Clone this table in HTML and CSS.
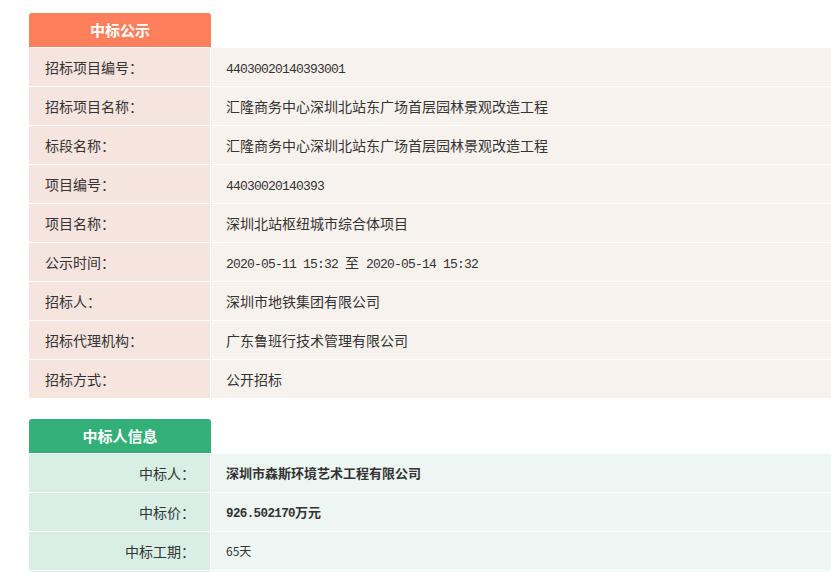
FILE: index.html
```html
<!DOCTYPE html>
<html lang="zh-CN">
<head>
<meta charset="utf-8">
<title>中标公示</title>
<link rel="stylesheet" href="styles.css">
</head>
<body>
<div class="page">
  <section class="block block-orange">
    <div class="tab">中标公示</div>
    <div class="rows">
      <div class="row"><div class="label">招标项目编号：</div><div class="value"><span class="num">44030020140393001</span></div></div>
      <div class="row"><div class="label">招标项目名称：</div><div class="value">汇隆商务中心深圳北站东广场首层园林景观改造工程</div></div>
      <div class="row"><div class="label">标段名称：</div><div class="value">汇隆商务中心深圳北站东广场首层园林景观改造工程</div></div>
      <div class="row"><div class="label">项目编号：</div><div class="value"><span class="num">44030020140393</span></div></div>
      <div class="row"><div class="label">项目名称：</div><div class="value">深圳北站枢纽城市综合体项目</div></div>
      <div class="row"><div class="label">公示时间：</div><div class="value"><span class="num">2020-05-11 15:32 </span>至<span class="num"> 2020-05-14 15:32</span></div></div>
      <div class="row"><div class="label">招标人：</div><div class="value">深圳市地铁集团有限公司</div></div>
      <div class="row"><div class="label">招标代理机构：</div><div class="value">广东鲁班行技术管理有限公司</div></div>
      <div class="row"><div class="label">招标方式：</div><div class="value">公开招标</div></div>
    </div>
  </section>
  <section class="block block-green">
    <div class="tab">中标人信息</div>
    <div class="rows">
      <div class="row"><div class="label">中标人：</div><div class="value strong">深圳市森斯环境艺术工程有限公司</div></div>
      <div class="row"><div class="label">中标价：</div><div class="value strong"><span class="num">926.502170</span>万元</div></div>
      <div class="row"><div class="label">中标工期：</div><div class="value small">65天</div></div>
      <div class="row"><div class="label"></div><div class="value"></div></div>
    </div>
  </section>
</div>
</body>
</html>
```
FILE: styles.css
```css
html, body {
  margin: 0;
  padding: 0;
  overflow: hidden;
  background: #ffffff;
}
body {
  font-family: "Noto Sans CJK SC", "Noto Sans", sans-serif;
  font-size: 14px;
  color: #333333;
}
.page {
  padding: 13px 0 0 29px;
  display: flex;
  flex-direction: column;
  gap: 21px;
}
.block {
  display: flex;
  flex-direction: column;
  gap: 1px;
}
.tab {
  width: 182px;
  height: 34px;
  line-height: 34px;
  text-align: center;
  color: #ffffff;
  font-size: 15px;
  font-weight: bold;
  border-radius: 3px 3px 0 0;
}
.rows {
  display: flex;
  flex-direction: column;
  gap: 1px;
}
.row {
  display: grid;
  grid-template-columns: 181px 1fr;
  column-gap: 1px;
  height: 38px;
}
.label, .value {
  line-height: 38px;
  white-space: nowrap;
  overflow: hidden;
}
.label {
  padding: 0 15px 0 16px;
}
.value {
  padding: 0 15px;
}
.num {
  font-family: "Liberation Mono", monospace;
  font-size: 13px;
  letter-spacing: -0.8px;
  white-space: pre;
}
.strong {
  font-weight: bold;
  font-size: 13px;
}
.strong .num {
  font-size: 12.5px;
  letter-spacing: -0.6px;
}
.small {
  font-size: 12px;
}
.block-orange .tab { background: #fe7f5b; }
.block-orange .label { background: #f6e4df; }
.block-orange .value { background: #f8f2ef; }
.block-green .tab { background: #33b077; }
.block-green .label { background: #d9efe5; text-align: right; }
.block-green .value { background: #edf6f2; }
```
